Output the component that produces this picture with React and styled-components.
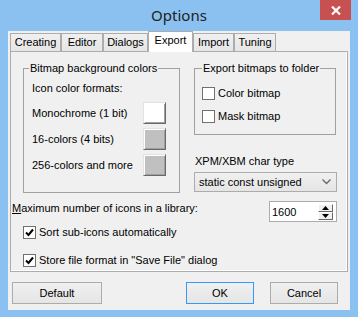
import React from 'react';
import styled, { createGlobalStyle } from 'styled-components';

const GlobalStyle = createGlobalStyle`
  html, body {
    margin: 0;
    padding: 0;
    overflow: hidden;
  }
  body {
    font-family: "Liberation Sans", Arial, sans-serif;
    font-size: 11px;
    color: #000;
  }
  * {
    box-sizing: border-box;
  }
`;

const tabs = [
  { label: 'Creating', width: 51 },
  { label: 'Editor', width: 42 },
  { label: 'Dialogs', width: 45 },
  { label: 'Export', width: 45, active: true },
  { label: 'Import', width: 41 },
  { label: 'Tuning', width: 42 },
];

const swatches = [
  { label: 'Monochrome (1 bit)', color: '#ffffff' },
  { label: '16-colors (4 bits)', color: '#c0c0c0' },
  { label: '256-colors and more', color: '#c0c0c0' },
];

const Check = ({ checked }) => (
  <CheckBox>
    {checked && (
      <svg width="9" height="9" viewBox="0 0 9 9">
        <path d="M1 4.5 L3.5 7 L8 1.5" fill="none" stroke="#000" strokeWidth="2" />
      </svg>
    )}
  </CheckBox>
);

const App = () => {
  return (
    <>
      <GlobalStyle />
      <Window>
        <TitleBar>
          <Title>Options</Title>
          <CloseButton>
            <svg width="10" height="9" viewBox="0 0 10 9">
              <path d="M1 0.5 L9 8.5 M9 0.5 L1 8.5" stroke="#fff" strokeWidth="2.2" />
            </svg>
          </CloseButton>
        </TitleBar>
        <Client>
          <TabStrip>
            {tabs.map((t) => (
              <Tab key={t.label} $width={t.width} $active={t.active}>
                {t.label}
              </Tab>
            ))}
          </TabStrip>
          <Panel>
            <TopSection>
              <GroupBox $width={157} $height={131} $padLeft={8} $padRight={13} $padTop={7}>
                <Legend $shift={-3}>Bitmap background colors</Legend>
                <Caption>Icon color formats:</Caption>
                <SwatchList>
                  {swatches.map((s) => (
                    <SwatchRow key={s.label}>
                      <span>{s.label}</span>
                      <Swatch $color={s.color} />
                    </SwatchRow>
                  ))}
                </SwatchList>
              </GroupBox>
              <Column>
                <GroupBox $width={142} $height={73} $padLeft={7} $padRight={7} $padTop={12}>
                  <Legend $shift={0}>Export bitmaps to folder</Legend>
                  <CheckList $gap={10}>
                    <CheckRow>
                      <Check />
                      <span>Color bitmap</span>
                    </CheckRow>
                    <CheckRow>
                      <Check />
                      <span>Mask bitmap</span>
                    </CheckRow>
                  </CheckList>
                </GroupBox>
                <FieldLabel>XPM/XBM char type</FieldLabel>
                <Combo>
                  <span>static const unsigned</span>
                  <svg width="9" height="6" viewBox="0 0 9 6">
                    <path d="M0.5 0.5 L4.5 4.5 L8.5 0.5" fill="none" stroke="#666" strokeWidth="1.3" />
                  </svg>
                </Combo>
              </Column>
            </TopSection>
            <MaxRow>
              <MaxLabel>
                <u>M</u>aximum number of icons in a library:
              </MaxLabel>
              <SpinEdit>
                <span>1600</span>
                <SpinButtons>
                  <SpinHalf>
                    <svg width="7" height="4" viewBox="0 0 7 4">
                      <path d="M0 4 L3.5 0 L7 4 Z" fill="#000" />
                    </svg>
                  </SpinHalf>
                  <SpinHalf>
                    <svg width="7" height="4" viewBox="0 0 7 4">
                      <path d="M0 0 L3.5 4 L7 0 Z" fill="#000" />
                    </svg>
                  </SpinHalf>
                </SpinButtons>
              </SpinEdit>
            </MaxRow>
            <OptionList>
              <CheckRow>
                <Check checked />
                <span>Sort sub-icons automatically</span>
              </CheckRow>
              <CheckRow>
                <Check checked />
                <span>Store file format in "Save File" dialog</span>
              </CheckRow>
            </OptionList>
          </Panel>
          <ButtonRow>
            <Button $width={90}>Default</Button>
            <Spacer />
            <Button $width={68} $focused>OK</Button>
            <Button $width={68}>Cancel</Button>
          </ButtonRow>
        </Client>
      </Window>
    </>
  );
};

const Window = styled.div`
  width: 358px;
  height: 317px;
  background: #8bc1f1;
  display: flex;
  flex-direction: column;
`;

const TitleBar = styled.div`
  height: 31px;
  display: grid;
  grid-template-columns: 1fr auto 1fr;
  align-items: start;
`;

const Title = styled.div`
  grid-column: 2;
  font-family: "Noto Sans", "Open Sans", sans-serif;
  font-size: 15px;
  line-height: 20px;
  margin-top: 5px;
  color: #222;
`;

const CloseButton = styled.div`
  grid-column: 3;
  justify-self: end;
  width: 31px;
  height: 20px;
  margin-right: 7px;
  background: #c75050;
  display: flex;
  align-items: center;
  justify-content: center;
`;

const Client = styled.div`
  flex: 1;
  margin: 0 8px 7px 8px;
  padding: 0 2px;
  background: #f0f0f0;
  display: flex;
  flex-direction: column;
`;

const TabStrip = styled.div`
  height: 20px;
  display: flex;
  align-items: flex-end;
  position: relative;
  z-index: 1;
`;

const Tab = styled.div`
  width: ${(p) => p.$width}px;
  height: ${(p) => (p.$active ? 21 : 18)}px;
  margin-bottom: ${(p) => (p.$active ? -1 : 0)}px;
  border: 1px solid #acacac;
  border-bottom: ${(p) => (p.$active ? 'none' : '0')};
  background: ${(p) => (p.$active ? '#ffffff' : 'linear-gradient(#f0f0f0, #e5e5e5)')};
  display: flex;
  justify-content: center;
  align-items: ${(p) => (p.$active ? 'flex-start' : 'center')};
  padding-top: ${(p) => (p.$active ? 2 : 0)}px;
  line-height: 13px;
`;

const Panel = styled.div`
  height: 221px;
  border: 1px solid #acacac;
  background: #f0f0f0;
  box-shadow: inset -1px -1px 0 #ffffff;
  display: flex;
  flex-direction: column;
`;

const TopSection = styled.div`
  display: flex;
  gap: 14px;
  margin: 10px 0 0 12px;
`;

const GroupBox = styled.fieldset`
  margin: 0;
  min-width: 0;
  width: ${(p) => p.$width}px;
  height: ${(p) => p.$height}px;
  border: 1px solid #a0a0a0;
  padding: ${(p) => p.$padTop}px ${(p) => p.$padRight}px 0 ${(p) => p.$padLeft}px;
`;

const Legend = styled.legend`
  padding: 0 1px;
  margin-left: ${(p) => p.$shift}px;
  line-height: 13px;
`;

const Caption = styled.div`
  line-height: 13px;
`;

const SwatchList = styled.div`
  display: flex;
  flex-direction: column;
  gap: 4px;
  margin-top: 7px;
`;

const SwatchRow = styled.div`
  height: 22px;
  display: flex;
  justify-content: space-between;
  align-items: center;
`;

const Swatch = styled.div`
  width: 23px;
  height: 22px;
  background: ${(p) => p.$color};
  border: 1px solid;
  border-color: #e3e3e3 #696969 #696969 #e3e3e3;
  box-shadow: inset 1px 1px 0 #ffffff, inset -1px -1px 0 #a0a0a0;
`;

const CheckList = styled.div`
  display: flex;
  flex-direction: column;
  gap: ${(p) => p.$gap}px;
`;

const CheckRow = styled.div`
  height: 13px;
  display: flex;
  align-items: center;
  gap: 3px;
  line-height: 13px;
`;

const CheckBox = styled.div`
  width: 13px;
  height: 13px;
  flex: none;
  border: 1px solid #707070;
  background: #ffffff;
  display: flex;
  align-items: center;
  justify-content: center;
`;

const Column = styled.div`
  width: 143px;
  display: flex;
  flex-direction: column;
`;

const FieldLabel = styled.div`
  line-height: 13px;
  margin: 20px 0 0 1px;
`;

const Combo = styled.div`
  height: 20px;
  margin-top: 4px;
  border: 1px solid #acacac;
  background: linear-gradient(#f0f0f0, #e5e5e5);
  display: flex;
  align-items: center;
  justify-content: space-between;
  padding: 0 5px 0 4px;
`;

const MaxRow = styled.div`
  display: flex;
  align-items: flex-start;
  margin: 8px 10px 0 1px;
`;

const MaxLabel = styled.div`
  line-height: 13px;
  padding-top: 1px;
`;

const SpinEdit = styled.div`
  width: 68px;
  height: 21px;
  margin-left: auto;
  border: 1px solid #acacac;
  background: #ffffff;
  display: flex;
  align-items: center;
  justify-content: space-between;
  padding: 0 3px 0 2px;
`;

const SpinButtons = styled.div`
  width: 15px;
  height: 16px;
  display: flex;
  flex-direction: column;
`;

const SpinHalf = styled.div`
  flex: 1;
  background: #f0f0f0;
  border: 1px solid;
  border-color: #ffffff #696969 #696969 #ffffff;
  display: flex;
  align-items: center;
  justify-content: center;
`;

const OptionList = styled.div`
  display: flex;
  flex-direction: column;
  gap: 15px;
  margin: 4px 0 0 12px;
`;

const ButtonRow = styled.div`
  display: flex;
  gap: 16px;
  margin: 10px 10px 0 2px;
`;

const Spacer = styled.div`
  flex: 1;
`;

const Button = styled.div`
  width: ${(p) => p.$width}px;
  height: 22px;
  border: 1px solid ${(p) => (p.$focused ? '#3399ff' : '#acacac')};
  background: linear-gradient(#f0f0f0, #e5e5e5);
  display: flex;
  align-items: center;
  justify-content: center;
`;

export default App;
